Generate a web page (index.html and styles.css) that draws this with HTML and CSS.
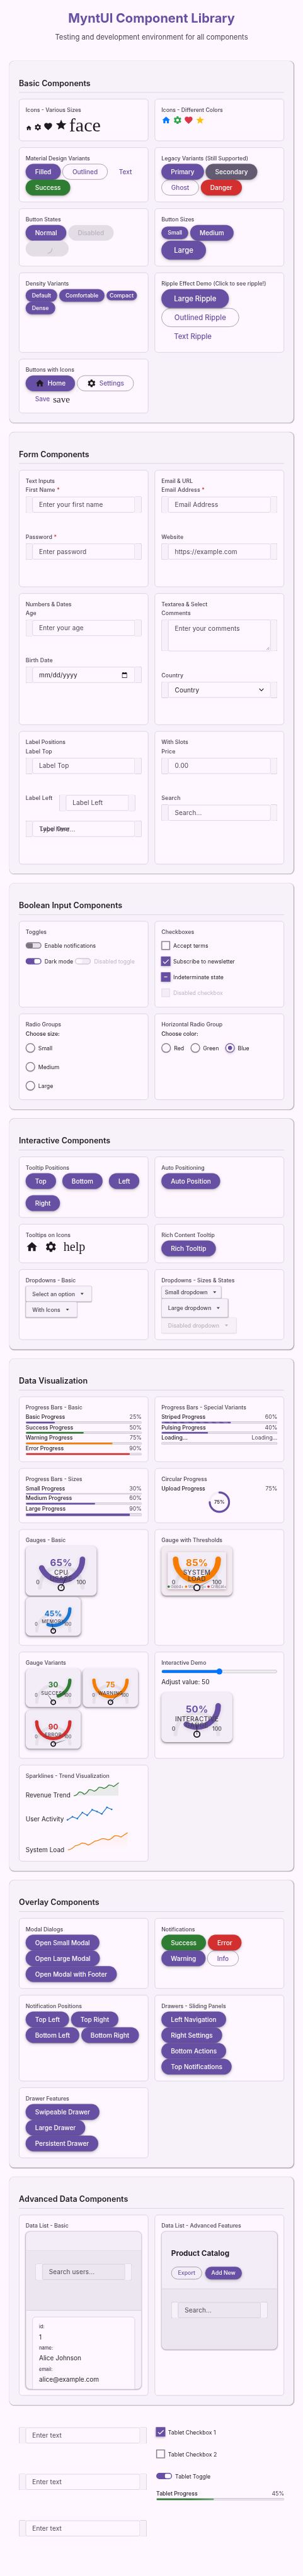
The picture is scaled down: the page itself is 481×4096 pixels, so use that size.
FILE: index.html
```html
<!DOCTYPE html>
<html lang="en">
<head>
<meta charset="utf-8">
<title>MyntUI Component Library</title>
<link rel="stylesheet" href="styles.css">
</head>
<body>
<svg class="defs" width="0" height="0">
  <defs>
    <symbol id="home" viewBox="0 0 24 24"><path d="M10 20v-6h4v6h5v-8h3L12 3 2 12h3v8z"/></symbol>
    <symbol id="gear" viewBox="0 0 24 24"><path d="M19.14 12.94c.04-.3.06-.61.06-.94 0-.32-.02-.64-.07-.94l2.03-1.58a.49.49 0 0 0 .12-.61l-1.92-3.32a.49.49 0 0 0-.59-.22l-2.39.96c-.5-.38-1.03-.7-1.62-.94l-.36-2.54a.48.48 0 0 0-.48-.41h-3.84c-.24 0-.43.17-.47.41l-.36 2.54c-.59.24-1.13.57-1.62.94l-2.39-.96a.48.48 0 0 0-.59.22L2.74 8.87a.48.48 0 0 0 .12.61l2.03 1.58c-.05.3-.09.63-.09.94s.02.64.07.94l-2.03 1.58a.49.49 0 0 0-.12.61l1.92 3.32c.12.22.37.29.59.22l2.39-.96c.5.38 1.03.7 1.62.94l.36 2.54c.05.24.24.41.48.41h3.84c.24 0 .44-.17.47-.41l.36-2.54c.59-.24 1.13-.56 1.62-.94l2.39.96c.22.08.47 0 .59-.22l1.92-3.32a.48.48 0 0 0-.12-.61l-2.01-1.58zM12 15.6A3.6 3.6 0 1 1 12 8.4a3.6 3.6 0 0 1 0 7.2z"/></symbol>
    <symbol id="heart" viewBox="0 0 24 24"><path d="M12 21.35l-1.45-1.32C5.4 15.36 2 12.28 2 8.5 2 5.42 4.42 3 7.5 3c1.74 0 3.41.81 4.5 2.09C13.09 3.81 14.76 3 16.5 3 19.58 3 22 5.42 22 8.5c0 3.78-3.4 6.86-8.55 11.54L12 21.35z"/></symbol>
    <symbol id="star" viewBox="0 0 24 24"><path d="M12 17.27L18.18 21l-1.64-7.03L22 9.24l-7.19-.61L12 2 9.19 8.63 2 9.24l5.46 4.73L5.82 21z"/></symbol>
    <linearGradient id="loadFill" x1="0" y1="0" x2="0" y2="1"><stop offset="0" stop-color="#f57c00" stop-opacity=".08"/><stop offset="1" stop-color="#f57c00" stop-opacity="0"/></linearGradient>
  </defs>
</svg>
<div class="viewport">
<div class="page">
  <header class="hero">
    <h1>MyntUI Component Library</h1>
    <p>Testing and development environment for all components</p>
  </header>

  <section class="section">
    <h2>Basic Components</h2>
    <div class="grid rows-basic">
      <div class="card"><h3>Icons - Various Sizes</h3>
        <div class="icons sizes"><svg class="i16"><use href="#home"/></svg><svg class="i20"><use href="#gear"/></svg><svg class="i24"><use href="#heart"/></svg><svg class="i32"><use href="#star"/></svg><span class="serif face">face</span></div>
      </div>
      <div class="card"><h3>Icons - Different Colors</h3>
        <div class="icons"><svg class="i24 blue"><use href="#home"/></svg><svg class="i24 green"><use href="#gear"/></svg><svg class="i24 red"><use href="#heart"/></svg><svg class="i24 gold"><use href="#star"/></svg></div>
      </div>
      <div class="card"><h3>Material Design Variants</h3>
        <div class="btns"><button class="btn">Filled</button><button class="btn outlined">Outlined</button><button class="btn text">Text</button><button class="btn success">Success</button></div>
      </div>
      <div class="card"><h3>Legacy Variants (Still Supported)</h3>
        <div class="btns"><button class="btn">Primary</button><button class="btn secondary">Secondary</button><button class="btn outlined">Ghost</button><button class="btn danger">Danger</button></div>
      </div>
      <div class="card"><h3>Button States</h3>
        <div class="btns"><button class="btn">Normal</button><button class="btn disabled">Disabled</button><button class="btn disabled loading"><svg viewBox="0 0 26 26"><path d="M25 12a12 12 0 0 1-11 13"/></svg></button></div>
      </div>
      <div class="card"><h3>Button Sizes</h3>
        <div class="btns"><button class="btn small">Small</button><button class="btn">Medium</button><button class="btn large">Large</button></div>
      </div>
      <div class="card"><h3>Density Variants</h3>
        <div class="btns"><button class="btn small">Default</button><button class="btn small">Comfortable</button><button class="btn small compact">Compact</button><button class="btn small">Dense</button></div>
      </div>
      <div class="card"><h3>Ripple Effect Demo (Click to see ripple!)</h3>
        <div class="btns stack"><button class="btn large">Large Ripple</button><button class="btn large outlined">Outlined Ripple</button><button class="btn large text">Text Ripple</button></div>
      </div>
      <div class="card"><h3>Buttons with Icons</h3>
        <div class="btns"><button class="btn withicon"><svg class="i24"><use href="#home"/></svg>Home</button><button class="btn outlined withicon"><svg class="i24"><use href="#gear"/></svg>Settings</button><button class="btn text withicon">Save<span class="serif save">save</span></button></div>
      </div>
    </div>
  </section>

  <section class="section">
    <h2>Form Components</h2>
    <div class="grid rows-form">
      <div class="card"><h3>Text Inputs</h3>
        <div class="field"><label>First Name <b>*</b></label><div class="box"><i></i><span>Enter your first name</span><i></i></div></div>
        <div class="field"><label>Password <b>*</b></label><div class="box"><i></i><span>Enter password</span><i></i></div></div>
      </div>
      <div class="card"><h3>Email &amp; URL</h3>
        <div class="field"><label>Email Address <b>*</b></label><div class="box"><i></i><span>Email Address</span><i></i></div></div>
        <div class="field"><label>Website</label><div class="box"><i></i><span>https://example.com</span><i></i></div></div>
      </div>
      <div class="card"><h3>Numbers &amp; Dates</h3>
        <div class="field"><label>Age</label><div class="box"><i></i><span>Enter your age</span><i></i></div></div>
        <div class="field"><label>Birth Date</label><div class="box"><i></i><span class="dark date">mm/dd/yyyy<svg viewBox="0 0 13 15"><path d="M2.5 0h1.600v1.500h4.800V0h1.600v1.500H12a1 1 0 0 1 1 1V14a1 1 0 0 1-1 1H1a1 1 0 0 1-1-1V2.500a1 1 0 0 1 1-1h1.500zM1.300 5v8.700h10.400V5z" fill-rule="evenodd"/></svg></span><i></i></div></div>
      </div>
      <div class="card"><h3>Textarea &amp; Select</h3>
        <div class="field tall"><label>Comments</label><div class="box"><i></i><span class="area">Enter your comments<svg viewBox="0 0 8 8"><path d="M0.500 7.500l7-7M4.500 7.500l3-3"/></svg></span><i></i></div></div>
        <div class="field"><label>Country</label><div class="box"><i></i><span class="dark select">Country<svg viewBox="0 0 14 9"><path d="M1 1l6 6.500L13 1"/></svg></span><i></i></div></div>
      </div>
      <div class="card"><h3>Label Positions</h3>
        <div class="field"><label>Label Top</label><div class="box"><i></i><span>Label Top</span><i></i></div></div>
        <div class="field left"><label>Label Left</label><div class="box"><i></i><span>Label Left</span><i></i></div></div>
        <div class="field over"><div class="box"><i></i><span>Type here...</span><i></i></div><label>Label Over</label></div>
      </div>
      <div class="card"><h3>With Slots</h3>
        <div class="field"><label>Price</label><div class="box"><i></i><span>0.00</span><i></i></div></div>
        <div class="field"><label>Search</label><div class="box"><i></i><span>Search...</span><i></i></div></div>
      </div>
    </div>
  </section>

  <section class="section">
    <h2>Boolean Input Components</h2>
    <div class="grid rows-bool">
      <div class="card"><h3>Toggles</h3>
        <div class="opt"><i class="toggle"></i>Enable notifications</div>
        <div class="opt"><i class="toggle on"></i>Dark mode<i class="toggle off2"></i><span class="mute">Disabled toggle</span></div>
      </div>
      <div class="card"><h3>Checkboxes</h3>
        <div class="opt"><i class="check"></i>Accept terms</div>
        <div class="opt"><i class="check on"><svg viewBox="0 0 24 24"><path d="M5.500 13l4.500 4.500L19.500 8"/></svg></i>Subscribe to newsletter</div>
        <div class="opt"><i class="check on"><svg viewBox="0 0 24 24"><path d="M8 12h8"/></svg></i>Indeterminate state</div>
        <div class="opt mute"><i class="check dis"></i>Disabled checkbox</div>
      </div>
      <div class="card"><h3>Radio Groups</h3>
        <div class="legend">Choose size:</div>
        <div class="radios col"><span class="opt"><i class="radio"></i>Small</span><span class="opt"><i class="radio"></i>Medium</span><span class="opt"><i class="radio"></i>Large</span></div>
      </div>
      <div class="card"><h3>Horizontal Radio Group</h3>
        <div class="legend">Choose color:</div>
        <div class="radios"><span class="opt"><i class="radio"></i>Red</span><span class="opt"><i class="radio"></i>Green</span><span class="opt"><i class="radio on"></i>Blue</span></div>
      </div>
    </div>
  </section>

  <section class="section">
    <h2>Interactive Components</h2>
    <div class="grid rows-inter">
      <div class="card"><h3>Tooltip Positions</h3>
        <div class="btns wide"><button class="btn">Top</button><button class="btn">Bottom</button><button class="btn">Left</button><button class="btn">Right</button></div>
      </div>
      <div class="card"><h3>Auto Positioning</h3><div class="btns"><button class="btn">Auto Position</button></div></div>
      <div class="card"><h3>Tooltips on Icons</h3>
        <div class="icons tips"><svg class="i32"><use href="#home"/></svg><svg class="i32"><use href="#gear"/></svg><span class="serif help">help</span></div>
      </div>
      <div class="card"><h3>Rich Content Tooltip</h3><div class="btns"><button class="btn">Rich Tooltip</button></div></div>
      <div class="card"><h3>Dropdowns - Basic</h3>
        <div class="drops"><div class="drop">Select an option<i></i></div><div class="drop">With Icons<i></i></div></div>
      </div>
      <div class="card"><h3>Dropdowns - Sizes &amp; States</h3>
        <div class="drops"><div class="drop sm">Small dropdown<i></i></div><div class="drop lg">Large dropdown<i></i></div><div class="drop dis">Disabled dropdown<i></i></div></div>
      </div>
    </div>
  </section>

  <section class="section">
    <h2>Data Visualization</h2>
    <div class="grid rows-data">
      <div class="card"><h3>Progress Bars - Basic</h3>
        <div class="prog"><p>Basic Progress<span>25%</span></p><div class="bar"><i style="width:25%"></i></div></div>
        <div class="prog"><p>Success Progress<span>50%</span></p><div class="bar ok"><i style="width:50%"></i></div></div>
        <div class="prog"><p>Warning Progress<span>75%</span></p><div class="bar warn"><i style="width:75%"></i></div></div>
        <div class="prog"><p>Error Progress<span>90%</span></p><div class="bar err"><i style="width:90%"></i></div></div>
      </div>
      <div class="card"><h3>Progress Bars - Special Variants</h3>
        <div class="prog"><p>Striped Progress<span>60%</span></p><div class="bar striped"><i style="width:60%"></i></div></div>
        <div class="prog"><p>Pulsing Progress<span>40%</span></p><div class="bar"><i style="width:40%"></i></div></div>
        <div class="prog"><p>Loading...<span>Loading...</span></p><div class="bar"></div></div>
      </div>
      <div class="card"><h3>Progress Bars - Sizes</h3>
        <div class="prog"><p>Small Progress<span>30%</span></p><div class="bar sm"><i style="width:30%"></i></div></div>
        <div class="prog"><p>Medium Progress<span>60%</span></p><div class="bar"><i style="width:60%"></i></div></div>
        <div class="prog"><p>Large Progress<span>90%</span></p><div class="bar lg"><i style="width:90%"></i></div></div>
      </div>
      <div class="card"><h3>Circular Progress</h3>
        <div class="prog circ"><p>Upload Progress<span>75%</span></p>
          <svg viewBox="0 0 56 56"><circle class="ring" cx="28" cy="28" r="24.500"/><circle class="arc" cx="28" cy="28" r="24.500" pathLength="100" stroke-dasharray="75 100" transform="rotate(-90 28 28)"/><text x="28" y="32">75%</text></svg></div>
      </div>
      <div class="card"><h3>Gauges - Basic</h3>
        <div class="gauges">
          <svg class="gauge big purple" viewBox="0 0 180 126"><path class="track" d="M36 106a54 54 0 0 1 108 0"/><path class="fill" pathLength="180" stroke-dasharray="156 400" d="M144 34a54 54 0 0 1-108 0"/><text class="val" x="90" y="51">65%</text><text class="lab" x="90" y="73.500">CPU</text><text class="lab" x="90" y="89">USAGE</text><text class="num" x="31" y="97.500">0</text><text class="num" x="141" y="97.500">100</text><path class="needle" d="M89 106L90 58L91 106z" transform="rotate(27 90 106)"/><circle class="hub" cx="90" cy="106" r="7.500"/><path class="needle" d="M89.200 107L90 98h.400L90.800 107z" transform="rotate(27 90 106)"/></svg>
          <svg class="gauge sm info" viewBox="0 0 140 98"><path class="track" d="M28 86a42 42 0 0 1 84 0"/><path class="fill" pathLength="180" stroke-dasharray="108 400" d="M112 30a42 42 0 0 1-84 0"/><text class="val" x="70" y="49">45%</text><text class="lab" x="70" y="67">MEMORY</text><text class="num" x="27" y="72">0</text><text class="num" x="106.500" y="72">100</text><path class="needle" d="M69.200 86L70 48L70.800 86z" transform="rotate(-9 70 86)"/><circle class="hub" cx="70" cy="86" r="5.700"/><path class="needle" d="M69.300 86L70 79L70.700 86z" transform="rotate(-9 70 86)"/></svg>
        </div>
      </div>
      <div class="card"><h3>Gauge with Thresholds</h3>
        <div class="gauges">
          <svg class="gauge big alert glow" viewBox="0 0 180 126"><rect class="plate" x="16" y="16" width="148" height="94"/><path class="track" d="M36 106a54 54 0 0 1 108 0"/><path class="fill" pathLength="180" stroke-dasharray="180 400" d="M144 34a54 54 0 0 1-108 0"/><text class="val" x="90" y="51">85%</text><text class="lab" x="90" y="73.500">SYSTEM</text><text class="lab" x="90" y="89">LOAD</text><text class="num" x="31" y="97.500">0</text><text class="num" x="141" y="97.500">100</text><circle cx="18.500" cy="103.500" r="3" fill="#2e7d32"/><text class="key" x="24" y="106.500">Good+</text><circle cx="62.500" cy="103.500" r="3" fill="#f57c00"/><text class="key" x="68" y="106.500">Warning+</text><circle cx="119.500" cy="103.500" r="3" fill="#d32f2f"/><text class="key" x="125" y="106.500">Critical+</text><path class="needle soft" d="M89 106L90 58L91 106z" transform="rotate(63 90 106)"/><circle class="hub" cx="90" cy="106" r="7.500"/></svg>
        </div>
      </div>
      <div class="card"><h3>Gauge Variants</h3>
        <div class="gauges flow">
          <svg class="gauge sm good" viewBox="0 0 140 98"><path class="track" d="M28 86a42 42 0 0 1 84 0"/><path class="fill" pathLength="180" stroke-dasharray="72 400" d="M112 30a42 42 0 0 1-84 0"/><text class="val" x="70" y="49">30</text><text class="lab" x="70" y="67">SUCCESS</text><text class="num" x="27" y="72">0</text><text class="num" x="106.500" y="72">100</text><path class="needle" d="M69.200 86L70 50L70.800 86z" transform="rotate(-36 70 86)"/><circle class="hub" cx="70" cy="86" r="5.700"/><path class="needle" d="M69.300 86L70 79L70.700 86z" transform="rotate(-36 70 86)"/></svg>
          <svg class="gauge sm alert" viewBox="0 0 140 98"><path class="track" d="M28 86a42 42 0 0 1 84 0"/><path class="fill" pathLength="180" stroke-dasharray="180 400" d="M112 30a42 42 0 0 1-84 0"/><text class="val" x="70" y="49">75</text><text class="lab" x="70" y="67">WARNING</text><text class="num" x="27" y="72">0</text><text class="num" x="106.500" y="72">100</text><path class="needle" d="M69.200 86L70 50L70.800 86z" transform="rotate(45 70 86)"/><circle class="hub" cx="70" cy="86" r="5.700"/><path class="needle" d="M69.300 86L70 79L70.700 86z" transform="rotate(45 70 86)"/></svg>
          <svg class="gauge sm bad" viewBox="0 0 140 98"><path class="track" d="M28 86a42 42 0 0 1 84 0"/><path class="fill" pathLength="180" stroke-dasharray="180 400" d="M112 30a42 42 0 0 1-84 0"/><text class="val" x="70" y="49">90</text><text class="lab" x="70" y="67">ERROR</text><text class="num" x="27" y="72">0</text><text class="num" x="106.500" y="72">100</text><path class="needle" d="M69.200 86L70 48L70.800 86z" transform="rotate(72 70 86)"/><circle class="hub" cx="70" cy="86" r="5.700"/><path class="needle" d="M69.300 86L70 79L70.700 86z" transform="rotate(72 70 86)"/></svg>
        </div>
      </div>
      <div class="card"><h3>Interactive Demo</h3>
        <input class="range" type="range" min="0" max="100" value="50">
        <p class="adjust">Adjust value: 50</p>
        <svg class="gauge big purple" viewBox="0 0 180 126"><path class="track" d="M36 106a54 54 0 0 1 108 0"/><path class="fill" pathLength="180" stroke-dasharray="120 400" d="M144 34a54 54 0 0 1-108 0"/><text class="val" x="90" y="51">50%</text><text class="lab" x="90" y="73.500">INTERACTIVE</text><text class="lab" x="90" y="89">GAUGE</text><text class="num" x="31" y="97.500">0</text><text class="num" x="141" y="97.500">100</text><path class="needle" d="M89 106L90 58L91 106z"/><circle class="hub" cx="90" cy="106" r="7.500"/><path class="needle" d="M89.200 107L90 98h.400L90.800 107z"/></svg>
      </div>
      <div class="card"><h3>Sparklines - Trend Visualization</h3>
        <div class="spark r1">Revenue Trend<svg width="120" height="40" viewBox="183 22 120 40"><path d="M186.600 58.200Q193 58.200 199.300 49.300Q205.600 47.500 212 54.600Q218 53.600 224.300 43.200Q230.600 41.700 237 46.800Q243 45.800 249.300 37.100Q255.600 35.700 262 39.600Q268 38.800 274.300 31.400Q280.600 30 287 35L299.300 25.700V58H186z" fill="#2e7d32" fill-opacity=".1"/><path class="ln" stroke="#2e7d32" d="M186.600 58.200Q193 58.200 199.300 49.300Q205.600 47.500 212 54.600Q218 53.600 224.300 43.200Q230.600 41.700 237 46.800Q243 45.800 249.300 37.100Q255.600 35.700 262 39.600Q268 38.800 274.300 31.400Q280.600 30 287 35L299.300 25.700"/></svg></div>
        <div class="spark r2">User Activity<svg width="120" height="40" viewBox="166 84 120 40"><path class="ln" stroke="#1976d2" d="M170 119.600L182.700 111.800L195 116.400L207.700 101L220 108.200L232.600 93.900L245 98.600L257 104.600L270 87.900L282 92.900"/><g fill="#1976d2"><circle cx="170" cy="119.600" r="2"/><circle cx="182.700" cy="111.800" r="2"/><circle cx="195" cy="116.400" r="2"/><circle cx="207.700" cy="101" r="2"/><circle cx="220" cy="108.200" r="2"/><circle cx="232.600" cy="93.900" r="2"/><circle cx="245" cy="98.600" r="2"/><circle cx="257" cy="104.600" r="2"/><circle cx="270" cy="87.900" r="2"/><circle cx="282" cy="92.900" r="2"/></g></svg></div>
        <div class="spark r3">System Load<svg width="160" height="60" viewBox="168 142 160 60"><path d="M172.900 195.400Q181 195.400 190.500 185.400Q199 184.400 207.200 178.600Q215.600 177.600 223.300 183.600L240 173.900Q248 172.900 257.100 167.900Q265.500 165.900 273.300 170.400Q281.600 169.400 290 160Q298.600 158.500 306.600 163.200L322.800 152.500V195.400z" fill="url(#loadFill)"/><path class="ln" stroke="#f57c00" d="M172.900 195.400Q181 195.400 190.500 185.400Q199 184.400 207.200 178.600Q215.600 177.600 223.300 183.600Q231.600 180 240 173.900Q248 172.900 257.100 167.900Q265.500 165.900 273.300 170.400Q281.600 169.400 290 160Q298.600 158.500 306.600 163.200L322.800 152.500"/></svg></div>
      </div>
    </div>
  </section>

  <section class="section">
    <h2>Overlay Components</h2>
    <div class="grid rows-over">
      <div class="card"><h3>Modal Dialogs</h3><div class="btns stack"><button class="btn">Open Small Modal</button><button class="btn">Open Large Modal</button><button class="btn">Open Modal with Footer</button></div></div>
      <div class="card"><h3>Notifications</h3><div class="btns"><button class="btn success">Success</button><button class="btn danger">Error</button><button class="btn">Warning</button><button class="btn outlined">Info</button></div></div>
      <div class="card"><h3>Notification Positions</h3><div class="btns"><button class="btn">Top Left</button><button class="btn">Top Right</button><button class="btn">Bottom Left</button><button class="btn">Bottom Right</button></div></div>
      <div class="card"><h3>Drawers - Sliding Panels</h3><div class="btns stack"><button class="btn">Left Navigation</button><button class="btn">Right Settings</button><button class="btn">Bottom Actions</button><button class="btn">Top Notifications</button></div></div>
      <div class="card"><h3>Drawer Features</h3><div class="btns stack"><button class="btn">Swipeable Drawer</button><button class="btn">Large Drawer</button><button class="btn">Persistent Drawer</button></div></div>
    </div>
  </section>

  <section class="section">
    <h2>Advanced Data Components</h2>
    <div class="grid rows-adv">
      <div class="card"><h3>Data List - Basic</h3>
        <div class="list users"><div class="head"></div><div class="tools"><div class="box"><i></i><span>Search users...</span><i></i></div></div>
          <div class="body"><div class="item"><small>id:</small><p>1</p><small>name:</small><p>Alice Johnson</p><small>email:</small><p>alice@example.com</p></div></div></div>
      </div>
      <div class="card"><h3>Data List - Advanced Features</h3>
        <div class="list products"><div class="head"><h4>Product Catalog</h4><div class="acts"><button class="btn small outlined">Export</button><button class="btn small">Add New</button></div></div><div class="tools"><div class="box"><i></i><span>Search...</span><i></i></div></div></div>
      </div>
    </div>
  </section>

  <div class="tablet">
    <div class="col-a"><div class="box"><i></i><span>Enter text</span><i></i></div><div class="box"><i></i><span>Enter text</span><i></i></div><div class="box"><i></i><span>Enter text</span><i></i></div></div>
    <div class="col-b">
      <div class="opt"><i class="check on"><svg viewBox="0 0 24 24"><path d="M5.500 13l4.500 4.500L19.500 8"/></svg></i>Tablet Checkbox 1</div>
      <div class="opt"><i class="check"></i>Tablet Checkbox 2</div>
      <div class="opt"><i class="toggle on"></i>Tablet Toggle</div>
      <div class="prog"><p>Tablet Progress<span>45%</span></p><div class="bar ok shine"><i style="width:45%"></i></div></div>
    </div>
  </div>
</div>
</div>
</body>
</html>
```
FILE: styles.css
```css
* { box-sizing: border-box; }
html, body { margin: 0; background: #fef7ff; }
.defs { position: absolute; }
.viewport { width: 481px; height: 4096px; overflow: hidden; }
.page {
  width: 768px; height: 6539px; padding: 0 24px;
  transform: scale(0.6264); transform-origin: 0 0;
  background: #fef7ff; color: #1d1b20;
  font-family: Inter, "Liberation Sans", sans-serif; font-size: 14px;
}
h1, h2, h3, h4, p { margin: 0; font-weight: 400; }
i { font-style: normal; display: block; }
svg { display: block; flex: none; }

.hero { height: 155px; padding-top: 27px; text-align: center; }
.hero h1 { font-size: 32px; line-height: 40px; font-weight: 700; color: #6750a4; }
.hero p { margin-top: 13px; font-size: 18px; line-height: 28px; color: #49454f; }

.section { padding: 41px 24px 24px; margin-bottom: 24px; background: #f7f2fa; border-radius: 12px; box-shadow: 0 1px 2px rgba(0,0,0,.3), 0 0 2px rgba(0,0,0,.1); }
.section h2 { height: 39px; line-height: 30px; font-size: 20px; font-weight: 600; border-bottom: 1px solid #cac4d0; margin-bottom: 16px; }
.grid { display: grid; grid-template-columns: 328px 328px; gap: 16px; }
.rows-basic { grid-template-rows: 107px 139px 147px 203px 138px; }
.rows-form { grid-template-rows: 297px 334px 338px; }
.rows-bool { grid-template-rows: 219px 219px; }
.rows-inter { grid-template-rows: 155px 99px 179px; }
.rows-data { grid-template-rows: 166px 139px 295px 271px 245px; }
.rows-over { grid-template-rows: 179px 219px 179px; }
.rows-adv { grid-template-rows: 459px; }
.card { min-width: 0; padding: 16px; background: #fef7ff; border: 1px solid #cac4d0; border-radius: 8px; }
.card h3 { font-size: 14px; line-height: 21px; font-weight: 500; color: #49454f; margin-bottom: 4px; }

.icons { display: flex; gap: 4.600px; fill: #1d1b20; }
.sizes { align-items: baseline; }
.tips { gap: 16px; }
.i16 { width: 16px; height: 16px; }
.i20 { width: 20px; height: 20px; }
.i24 { width: 24px; height: 24px; }
.i32 { width: 32px; height: 32px; }
.blue { fill: #007bff; } .green { fill: #28a745; } .red { fill: #dc3545; } .gold { fill: #ffc107; }
.serif { font-family: "Liberation Serif", serif; color: #1d1b20; font-weight: 400; }
.face { font-size: 48px; line-height: 48px; }
.help { font-size: 32px; line-height: 32px; }
.save { font-size: 24px; line-height: 24px; }

.btns { display: flex; flex-wrap: wrap; align-items: center; column-gap: 4.600px; }
.btns.stack { flex-direction: column; align-items: flex-start; }
.btns.wide { gap: 16px; }
.btn {
  display: flex; align-items: center; justify-content: center; flex: none; height: 40px; margin: 0; padding: 0 24px 1px;
  border: 0; border-radius: 20px; background: #6750a4; color: #fff; font: 500 16px/20px Inter, sans-serif; white-space: nowrap;
  box-shadow: 0 1px 3px rgba(0,0,0,.3), 0 3px 8px 1px rgba(0,0,0,.15);
}
.btn.outlined { background: none; border: 1px solid #79747e; color: #6750a4; box-shadow: none; }
.btn.text { background: none; color: #6750a4; box-shadow: none; }
.btn.success { background: #2e7d32; }
.btn.danger { background: #d32f2f; }
.btn.secondary { background: #625b71; }
.btn.disabled { background: #e3dde6; color: #b9b3bd; box-shadow: none; }
.btn.loading { width: 109px; padding: 0; }
.loading svg { width: 26px; height: 26px; fill: none; stroke: #b9b3bd; stroke-width: 1.600; stroke-linecap: round; }
.btn.small { height: 32px; padding: 0 16px 1px; border-radius: 16px; font-size: 14px; }
.btn.small.compact { height: 24px; padding: 0 8px 1px; border-radius: 12px; }
.btn.large { height: 48px; padding: 0 32px 1px; border-radius: 24px; font-size: 18px; }
.btn.withicon { gap: 8px; fill: #1d1b20; }

.field { height: 119px; }
.field.tall { height: 157px; }
.field label { display: block; height: 25px; line-height: 17px; font-size: 14px; letter-spacing: .25px; color: #49454f; font-weight: 500; }
.field b { color: #d32f2f; font-weight: 500; }
.box { display: flex; align-items: center; height: 42px; }
.box i { width: 17px; align-self: stretch; background: #f7f2fa; border: 1px solid #cac4d0; border-right: 0; border-radius: 4px 0 0 4px; }
.box i:last-child { border: 1px solid #cac4d0; border-left: 0; border-radius: 0 4px 4px 0; }
.box span { display: flex; align-items: center; flex: 1; min-width: 0; height: 40px; padding: 0 16px; border: 1px solid #cac4d0; border-radius: 4px; font-size: 16px; letter-spacing: .18px; color: #49454f; white-space: nowrap; }
.box .dark { color: #1d1b20; justify-content: space-between; }
.date svg { width: 13px; height: 15px; margin-right: 3px; fill: #000; }
.select svg { width: 13px; height: 8px; fill: none; stroke: #000; stroke-width: 1.800; }
.tall .box { height: 80px; }
.box .area { height: 80px; position: relative; align-items: flex-start; padding-top: 10px; line-height: 22px; }
.area svg { position: absolute; right: 2px; bottom: 2px; width: 8px; height: 8px; stroke: #49454f; stroke-width: 1; }
.field.left { display: flex; height: 66px; }
.left label { width: 85px; }
.left .box { width: 192.500px; }
.field.over { position: relative; height: 42px; }
.over label { position: absolute; left: 37px; top: 12px; }

.opt { display: flex; align-items: center; gap: 8px; height: 40px; font-size: 14px; white-space: nowrap; }
.mute, .opt.mute { color: #bdb7c2; }
.toggle { flex: none; width: 40px; height: 16px; border: 2px solid #79747e; border-radius: 8px; background: #e6e0e9; overflow: hidden; }
.toggle::after { content: ""; display: block; width: 16px; height: 12px; background: #79747e; border-radius: 3px; }
.toggle.on { background: #6750a4; border-color: #6750a4; }
.toggle.on::after { margin-left: 20px; background: #fff; border-radius: 4px 7px 7px 4px; }
.toggle.off2 { margin-left: -3px; border-color: #c9c4ce; background: #f1ebf5; }
.toggle.off2::after { background: #fef7ff; }
.check { flex: none; width: 22px; height: 22px; border: 2px solid #79747e; background: #fef7ff; box-shadow: 0 1px 3px rgba(0,0,0,.2); }
.check.on { width: 24px; height: 24px; margin: 0 -1px; border: 0; background: #6750a4; box-shadow: 0 2px 5px rgba(0,0,0,.25); }
.check svg { width: 24px; height: 24px; fill: none; stroke: #fff; stroke-width: 2; }
.check.dis { border-color: #e6e0e9; background: #f3edf7; box-shadow: none; }
.legend { height: 25px; line-height: 17px; font-weight: 500; }
.radios { display: flex; gap: 16px; }
.radios.col { flex-direction: column; gap: 8px; }
.radio { flex: none; width: 24px; height: 24px; border: 2px solid #79747e; border-radius: 50%; box-shadow: 0 1px 2px rgba(0,0,0,.25); background: #fef7ff; }
.radio.on { border-color: #6750a4; background: radial-gradient(circle, #6750a4 5px, #fef7ff 5.800px); box-shadow: 0 2px 6px rgba(0,0,0,.25); }

.drops { display: flex; flex-direction: column; align-items: flex-start; }
.drop { display: flex; align-items: center; height: 40px; padding: 0 20px 0 16px; background: #f7f2fa; border: 1px solid #cac4d0; border-radius: 4px; box-shadow: 0 1px 2px rgba(0,0,0,.25); color: #49454f; font-weight: 500; white-space: nowrap; }
.drop i { margin-left: 14px; border: 4px solid transparent; border-top: 5px solid #49454f; border-bottom: 0; }
.drop.sm { height: 32px; padding: 0 12px 0 8px; }
.drop.lg { height: 48px; }
.drop.dis { opacity: .38; background: #ece6f0; }

.prog p { display: flex; justify-content: space-between; height: 20.700px; line-height: 17px; font-weight: 500; }
.prog p span { color: #49454f; font-weight: 400; }
.bar { height: 6px; padding: 1px; background: #e6e0e9; border-radius: 3px; box-shadow: inset 0 0 0 1px #cac4d0; }
.bar i { height: 100%; border-radius: 2px; background: #6750a4; }
.bar.sm { height: 4px; } .bar.lg { height: 8px; }
.ok i { background: #2e7d32; } .warn i { background: #f57c00; } .err i { background: #d32f2f; }
.striped i { background: repeating-linear-gradient(45deg, #8470b6 0 7px, #6750a4 7px 14px); }
.shine i { background: linear-gradient(90deg, #2e7d32 60%, #6ba46e); }
.circ svg { width: 56px; height: 56px; margin: -5px auto 0; }
.ring { fill: none; stroke: #f3edf7; stroke-width: 5; }
.arc { fill: none; stroke: #6750a4; stroke-width: 5; stroke-linecap: round; }
.circ text { font: 600 12px Inter, sans-serif; text-anchor: middle; fill: #1d1b20; }

.gauges { display: flex; flex-wrap: wrap; gap: 4px 5px; }
.gauges.flow { row-gap: 8px; }
.gauge { background: #f3edf7; border-radius: 12px; box-shadow: 0 2px 3px rgba(0,0,0,.25), 0 3px 7px 1px rgba(0,0,0,.15); }
.gauge.big { width: 180px; height: 126px; }
.gauge.sm { width: 140px; height: 98px; }
.gauge.glow { background: #f2eaf1; }
.gauge path { fill: none; stroke-linecap: round; }
.gauge .track { stroke: #e6e0e9; stroke-width: 10; }
.gauge .fill { stroke: currentColor; stroke-width: 14; filter: drop-shadow(0 2px 5px rgba(0,0,0,.12)); }
.sm .track { stroke-width: 8; }
.gauge.sm .fill { stroke-width: 8.500; }
.gauge .needle { fill: #1d1b20; }
.gauge .soft { opacity: .5; }
.hub { fill: #f3edf7; stroke: #1d1b20; stroke-width: 3; }
.gauge text { text-anchor: middle; font-family: Inter, sans-serif; fill: #49454f; }
.gauge .val { font-size: 24px; font-weight: 700; letter-spacing: .3px; fill: currentColor; }
.gauge .lab { font-size: 16px; font-weight: 500; letter-spacing: .5px; }
.gauge .num { font-size: 14px; font-weight: 500; }
.gauge .key { font-size: 10px; text-anchor: start; fill: #79747e; }
.gauge.sm .val { font-size: 18.500px; }
.gauge.sm .lab { font-size: 12px; letter-spacing: .7px; }
.gauge.sm .num { font-size: 11.500px; font-weight: 400; }
.purple { color: #6750a4; } .info { color: #1976d2; } .alert { color: #f57c00; } .good { color: #2e7d32; } .bad { color: #d32f2f; }
.plate { fill: #f3edf7; filter: drop-shadow(0 2px 3px rgba(90,20,20,.35)); }
.range { display: block; width: 294px; margin: 2px 0 0; height: 16px; }
.adjust { height: 45px; padding-top: 7px; line-height: 24px; font-size: 16px; }
.spark { display: flex; align-items: baseline; gap: 5px; font-size: 16px; line-height: 16px; height: 40px; }
.spark svg { overflow: visible; }
.spark.r2 { margin-top: 22px; }
.spark.r3 { margin-top: 18px; height: 60px; }
.ln { fill: none; stroke-width: 2; stroke-linejoin: round; stroke-linecap: round; }

.list { display: flex; flex-direction: column; overflow: hidden; border: 1px solid #cac4d0; border-radius: 12px; background: #f7f2fa; box-shadow: 0 1px 3px rgba(0,0,0,.3); }
.users { height: 401px; }
.products { height: 300px; }
.head { flex: none; height: 49px; background: #f3edf7; border-bottom: 1px solid #cac4d0; }
.tools { flex: none; height: 151px; padding: 32px 24px; background: #ece6f0; border-bottom: 1px solid #cac4d0; }
.products .head { height: 146px; padding: 42px 24px 0; }
.products .tools { border-bottom: 0; height: 154px; }
.head h4 { font-size: 18.720px; line-height: 28px; font-weight: 700; height: 47px; }
.acts { display: flex; gap: 8px; }
.body { padding: 16px; }
.item { height: 300px; padding: 16px; background: #fef7ff; border: 1px solid #cac4d0; border-radius: 8px; }
.item small { display: block; height: 20px; font-size: 12px; line-height: 16px; font-weight: 500; color: #49454f; }
.item p { height: 34px; line-height: 28px; font-size: 16px; }

.tablet { display: grid; grid-template-columns: 324px 324px; gap: 24px; padding: 32px 24px; }
.col-a { display: flex; flex-direction: column; gap: 76px; }
.col-b { display: flex; flex-direction: column; gap: 16px; margin-top: -8px; }
.col-b .prog { margin-top: -1px; }
```
